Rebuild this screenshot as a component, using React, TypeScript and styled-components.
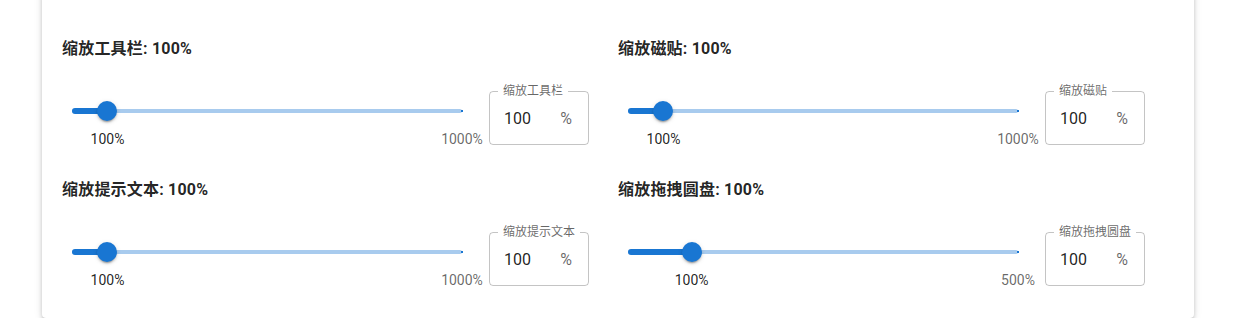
import styled, { createGlobalStyle } from 'styled-components';

const GlobalStyle = createGlobalStyle`
  body {
    margin: 0;
    background: #fff;
    font-family: Roboto, "Noto Sans CJK SC", sans-serif;
    overflow: hidden;
  }
`;

const Page = styled.div`
  padding-left: 42px;
`;

const Card = styled.div`
  width: 1152px;
  margin-top: -10px;
  padding: 47px 20px 32px;
  box-sizing: border-box;
  background: #fff;
  border-radius: 4px;
  box-shadow: 0 3px 3px -2px rgba(0, 0, 0, 0.2), 0 3px 4px 0 rgba(0, 0, 0, 0.14),
    0 1px 8px 0 rgba(0, 0, 0, 0.12);
`;

const Grid = styled.div`
  display: grid;
  grid-template-columns: 556px 556px;
  row-gap: 33px;
`;

const Setting = styled.div`
  display: flex;
  flex-direction: column;
  gap: 30px;
`;

const Title = styled.h3`
  margin: 0;
  font-size: 16px;
  line-height: 24px;
  font-weight: 700;
  letter-spacing: 0.2px;
  color: rgba(0, 0, 0, 0.87);
`;

const Row = styled.div`
  display: flex;
  align-items: flex-start;
`;

const SliderBox = styled.div`
  width: 410px;
  height: 54px;
  padding: 18px 10px 0;
  box-sizing: border-box;
`;

const Rail = styled.div`
  position: relative;
  height: 4px;
  color: #1976d2;

  &::before {
    content: '';
    position: absolute;
    inset: 0;
    border-radius: 2px;
    background: currentColor;
    opacity: 0.38;
  }
`;

const Track = styled.div`
  position: absolute;
  left: 0;
  top: -1px;
  height: 6px;
  border-radius: 3px;
  background: #1976d2;
`;

const Mark = styled.span`
  position: absolute;
  top: 1px;
  width: 2px;
  height: 2px;
  margin-left: -1px;
  background: #1976d2;
`;

const Thumb = styled.span`
  position: absolute;
  top: -8px;
  width: 20px;
  height: 20px;
  margin-left: -10px;
  border-radius: 50%;
  background: #1976d2;
  box-shadow: 0 3px 1px -2px rgba(0, 0, 0, 0.2), 0 2px 2px 0 rgba(0, 0, 0, 0.14),
    0 1px 5px 0 rgba(0, 0, 0, 0.12);
`;

const MarkLabel = styled.span<{ $active?: boolean }>`
  position: absolute;
  top: 20px;
  transform: translateX(-50%);
  font-size: 14px;
  line-height: 20px;
  white-space: nowrap;
  color: ${({ $active }) => ($active ? 'rgba(0, 0, 0, 0.87)' : 'rgba(0, 0, 0, 0.6)')};
`;

const Field = styled.div`
  position: relative;
  width: 100px;
  height: 54px;
  margin-left: 17px;
  padding: 0 16px 0 14px;
  box-sizing: border-box;
  display: flex;
  align-items: center;
  justify-content: space-between;
  border: 1px solid rgba(0, 0, 0, 0.23);
  border-radius: 4px;
`;

const FieldLabel = styled.span`
  position: absolute;
  top: -9px;
  left: 8px;
  padding: 0 5px;
  background: #fff;
  font-size: 12px;
  line-height: 16px;
  color: rgba(0, 0, 0, 0.6);
  white-space: nowrap;
`;

const Value = styled.span`
  font-size: 16px;
  color: rgba(0, 0, 0, 0.87);
`;

const Unit = styled.span`
  font-size: 16px;
  color: rgba(0, 0, 0, 0.6);
`;

type ScaleProps = {
  name: string;
  value: number;
  min: number;
  max: number;
};

const ScaleSetting = ({ name, value, min, max }: ScaleProps) => {
  const pct = ((value - min) / (max - min)) * 100;
  return (
    <Setting>
      <Title>
        {name}: {value}%
      </Title>
      <Row>
        <SliderBox>
          <Rail>
            <Track style={{ width: `${pct}%` }} />
            <Mark style={{ left: '100%' }} />
            <Thumb style={{ left: `${pct}%` }} />
            <MarkLabel $active style={{ left: `${pct}%` }}>
              100%
            </MarkLabel>
            <MarkLabel style={{ left: '100%' }}>{max}%</MarkLabel>
          </Rail>
        </SliderBox>
        <Field>
          <FieldLabel>{name}</FieldLabel>
          <Value>{value}</Value>
          <Unit>%</Unit>
        </Field>
      </Row>
    </Setting>
  );
};

const settings: ScaleProps[] = [
  { name: '缩放工具栏', value: 100, min: 10, max: 1000 },
  { name: '缩放磁贴', value: 100, min: 10, max: 1000 },
  { name: '缩放提示文本', value: 100, min: 10, max: 1000 },
  { name: '缩放拖拽圆盘', value: 100, min: 22, max: 500 },
];

export default function App() {
  return (
    <>
      <GlobalStyle />
      <Page>
        <Card>
          <Grid>
            {settings.map((s) => (
              <ScaleSetting key={s.name} {...s} />
            ))}
          </Grid>
        </Card>
      </Page>
    </>
  );
}
